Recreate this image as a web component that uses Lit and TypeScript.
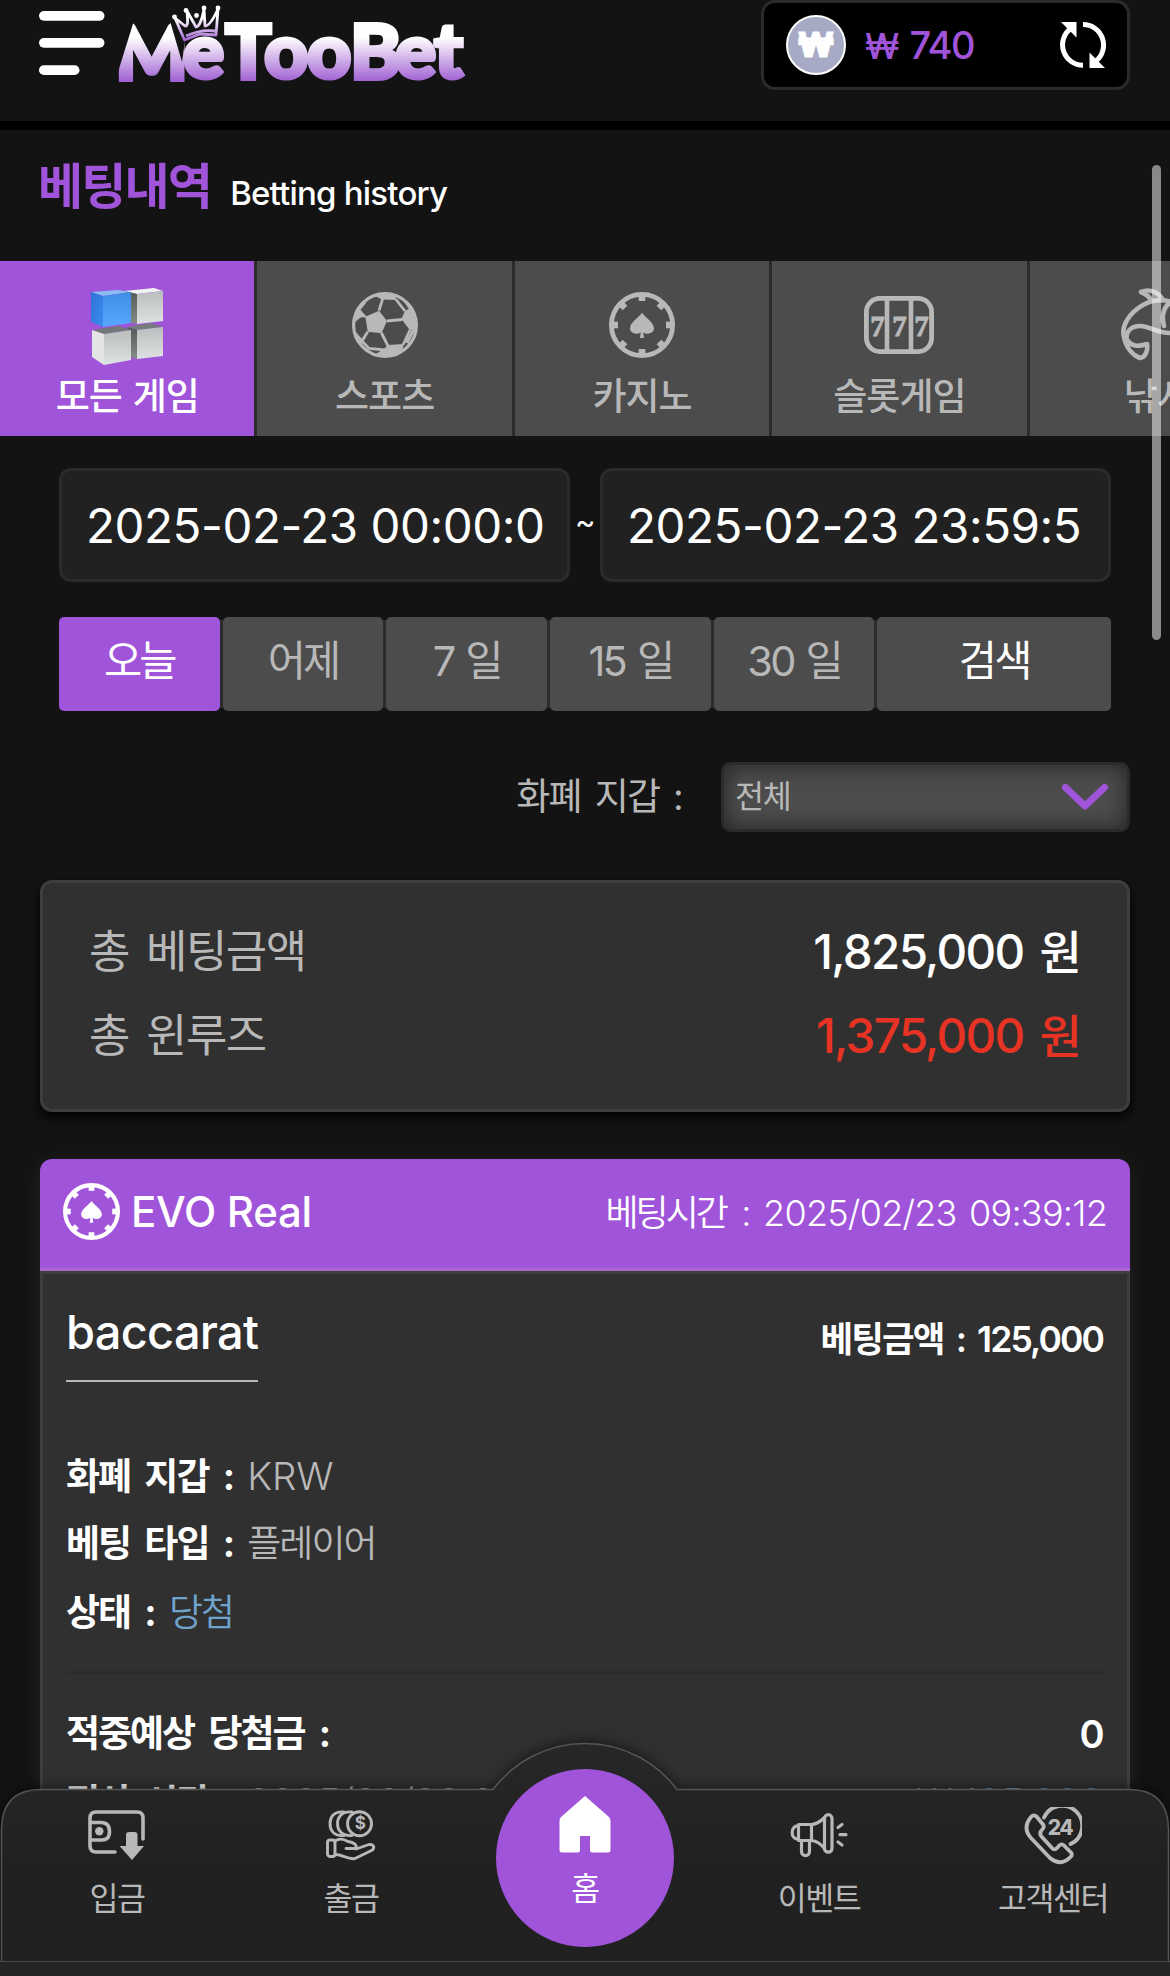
import { LitElement, html, svg, css } from "lit";
import { customElement } from "lit/decorators.js";
import { classMap } from "lit/directives/class-map.js";

const chipIcon = html`<svg class="chip" viewBox="0 0 66 66" fill="currentColor">
  <circle cx="33" cy="33" r="30.6" fill="none" stroke="currentColor" stroke-width="4.8" />
  ${[0, 45, 90, 135, 180, 225, 270, 315].map(
    (a) => svg`<rect x="29.7" y="3" width="6.6" height="6" transform="rotate(${a} 33 33)" />`
  )}
  <path d="M33 20.7C36 25.500 45 30 45 36.500C45 41 38.500 43.500 34.300 40.200L35 46H31L31.700 40.200C27.500 43.500 21 41 21 36.500C21 30 30 25.500 33 20.700Z" />
</svg>`;

const cubesIcon = html`<svg width="74" height="80" viewBox="0 0 74 80">
  <defs>
    <linearGradient id="blue" x1="0" y1="0" x2="0" y2="1"><stop offset="0" stop-color="#3f8ce6" /><stop offset="1" stop-color="#58a7ff" /></linearGradient>
    <linearGradient id="side" x1="0" y1="0" x2="1" y2="1"><stop offset="0" stop-color="#2d73d6" /><stop offset="1" stop-color="#3d8cf0" /></linearGradient>
    <linearGradient id="gray" x1="0" y1="0" x2="0" y2="1"><stop offset="0" stop-color="#b9bdbe" /><stop offset="1" stop-color="#dfe2e2" /></linearGradient>
    <linearGradient id="dark" x1="0" y1="0" x2="0" y2="1"><stop offset="0" stop-color="#555958" /><stop offset="1" stop-color="#868b8a" /></linearGradient>
  </defs>
  <path d="M34 4L64 1L73 4L47 7Z" fill="#f1f2f2" />
  <path d="M34 4L47 7V37L41 36Z" fill="url(#dark)" />
  <path d="M47 7L73 4V34L47 37Z" fill="url(#gray)" />
  <path d="M1 5L28 3L41 5L13 9Z" fill="#8dbcf3" />
  <path d="M1 5L13 9V40L1 35Z" fill="url(#side)" />
  <path d="M13 9L41 5V36L13 40Z" fill="url(#blue)" />
  <path d="M37 40L60 36L73 40L47 43Z" fill="#777b7b" />
  <path d="M37 40L47 43V72L41 70Z" fill="url(#dark)" />
  <path d="M47 43L73 40V69L47 72Z" fill="url(#gray)" />
  <path d="M2 43L28 39L41 43L14 47Z" fill="#737777" />
  <path d="M2 43L14 47V78L2 70Z" fill="#e3e5e5" />
  <path d="M14 47L41 43V73L14 78Z" fill="url(#gray)" />
</svg>`;

const ballIcon = html`<svg width="66" height="66" viewBox="0 0 66 66">
  <g fill="currentColor">
    <path d="M13.400 24.700L27 18.700L35 29L29.500 41.300L15.700 39.700Z" />
    <path d="M49.500 27L53 18.700L59 16L64.500 26V37L58 38.500Z" />
    <path d="M36 53L51.500 52L50 61L36 65L22 63L32 57Z" />
    <path d="M21 3L30 7.500L45 8L42 2Z" />
    <path d="M3 20L9 18L13 24L8 26L3 30Z" />
    <path d="M2 38L10 47L10 54L5 48Z" />
  </g>
  <g fill="none" stroke="currentColor" stroke-width="2.800">
    <circle cx="33" cy="33" r="31.400" stroke-width="3.200" />
    <path d="M27 18.700L30.600 7M44 7.500L53 19M35 29L50.400 27.500M29.500 41L36 54M15.700 39.700L10 49L17 56.500L33 58M58 38L51 53M13.400 25L6 18.500L13 10M54 10L58.500 17M62 37L55 51" />
  </g>
</svg>`;

const slotIcon = html`<svg width="70" height="58" viewBox="0 0 70 58">
  <rect x="2.400" y="2.400" width="65.200" height="53.200" rx="13.500" fill="none" stroke="currentColor" stroke-width="4.800" />
  <path d="M23 3V55M47 3V55" stroke="currentColor" stroke-width="4.600" />
  <text x="13" y="39.500" class="seven">7</text>
  <text x="35" y="39.500" class="seven">7</text>
  <text x="57" y="39.500" class="seven">7</text>
</svg>`;

const fishIcon = html`<svg width="72" height="74" viewBox="0 0 72 74" fill="none" stroke="currentColor" stroke-width="4.600" stroke-linejoin="round" stroke-linecap="round">
  <path d="M51 14C41 11 31 12 22 17C8 25 0 38 3 49C5 59 11 67 19 70C25 69 27 62 26 56C19 58 12 60 6 52C4 45 9 38 19 38C29 38 37 46 52 45C62 44 68 38 70 30" />
  <path d="M30 12C28 8 25 6 20 4C30 0 38 5 42 12M51 14C43 17 40 27 43 38M51 14C61 17 67 22 70 30" />
</svg>`;

const walletIcon = html`<svg width="58" height="51" viewBox="0 0 58 51" fill="none" stroke="currentColor" stroke-width="3.600" stroke-linecap="round">
  <path d="M27 42H8Q2 42 2 36V8Q2 2 8 2H49Q55 2 55 8V29M3 12.500H13Q21.500 12.500 21.500 21.500T13 30H3" />
  <circle cx="11.300" cy="21.300" r="4.200" fill="currentColor" stroke="none" />
  <path d="M38 25Q38 22 41 22H46.500Q49.500 22 49.500 25V36H56L44 50L31.500 36H38Z" fill="currentColor" stroke="none" />
</svg>`;

const coinsIcon = html`<svg width="50" height="51" viewBox="0 0 50 51" fill="none" stroke="currentColor" stroke-width="2.900" stroke-linecap="round" stroke-linejoin="round">
  <circle cx="33.500" cy="13.700" r="12" />
  <path d="M26 2C15 1 11.500 8 11.500 13.700S15 26.500 26 25.500M18 2C7 1 4 8 4 13.700S7 26.500 18 25.500" />
  <rect x="1.500" y="30" width="7.500" height="16.500" rx="2.600" />
  <path d="M9 31C14 27.500 18 29 22 31.500C28 32 31 35 30 38.500H20M30 39L43 34.500C47.500 34 49 37 46.500 40L29 48.500C22 50 16 44 9 44.500" />
  <text x="33.500" y="19.300" class="dollar">$</text>
</svg>`;

const hornIcon = html`<svg width="58" height="45" viewBox="0 0 58 45" fill="none" stroke="currentColor" stroke-width="3.200" stroke-linecap="round" stroke-linejoin="round">
  <rect x="34.500" y="1.700" width="7.500" height="37.500" rx="3.750" />
  <path d="M8.500 11.500H21.500V27.500H8.500ZM21.500 11.500C27 11.500 31 8 34.500 4.500M21.500 27.500C27 28 31 31 34.500 35.500M8.500 13C0 12 0 27 8.500 26M11.500 28V38.500C11.500 44 19.500 44 19.500 38.500V28M48 14.500L52 11.500M50 21.700H56M48 29L52 32" />
</svg>`;

const phoneIcon = html`<svg width="58" height="58" viewBox="0 0 58 58" fill="none" stroke="currentColor" stroke-width="3.800" stroke-linecap="round" stroke-linejoin="round">
  <path d="M20 10.500A20 20 0 1 1 46.500 37" />
  <path d="M12.500 9.500L19 17.500Q20.500 19.500 19 21.500Q14.500 26 17.500 29.500L28 41Q30.500 44 33.500 40.500Q37 35.500 40 38.500L47 45.500Q48.500 47.500 47 49.500Q37 60 26 51L7 31Q-2 21 7 10Q9.500 7 12.500 9.500Z" />
  <text x="36" y="27.500" class="hours">24</text>
</svg>`;

const tabs = [
  { label: "모든 게임", icon: cubesIcon, on: true },
  { label: "스포츠", icon: ballIcon },
  { label: "카지노", icon: chipIcon },
  { label: "슬롯게임", icon: slotIcon },
  { label: "낚시", icon: fishIcon },
];

const logoLetters: [string, number, number][] = [
  ["M", 115, 80],
  ["e", 183, 77.5],
  ["T", 225, 79],
  ["o", 264, 77.5],
  ["o", 307, 77.5],
  ["B", 350, 78.5],
  ["e", 395, 77.5],
  ["t", 434, 77.5],
];

@customElement("app-root")
export class AppRoot extends LitElement {
  static styles = css`
    :host {
      display: block;
      position: relative;
      width: 1170px;
      height: 1976px;
      overflow: hidden;
      background: #131313;
      color: #fff;
      font-family: Inter, "Noto Sans CJK KR", sans-serif;
      --accent: #a054da;
      --muted: #b8b8b8;
      --line: #2b2b2b;
    }
    * { box-sizing: border-box; }
    svg { display: block; flex: none; }
    .header { height: 130px; border-bottom: 9px solid #000; display: flex; justify-content: space-between; padding-right: 40px; }
    .brand { width: 480px; height: 100px; }
    .logo { font: 900 77px Lato, sans-serif; stroke-linejoin: miter; }
    .balance { width: 369px; height: 90px; border: 3px solid var(--line); border-radius: 14px; background: #000; display: flex; align-items: center; padding: 0 20px 0 22px; }
    .coin { width: 60px; height: 60px; border: 2.5px solid #fff; border-radius: 50%; background: #a7aac4; display: flex; align-items: center; justify-content: center; font: 900 34px/1 Inter, sans-serif; -webkit-text-stroke: 1px #fff; }
    .amount { flex: 1; padding-left: 19px; color: var(--accent); font-size: 38px; font-weight: 500; letter-spacing: -1.5px; word-spacing: 3px; }
    .sign { font-size: 35px; }
    .title { height: 131px; display: flex; align-items: baseline; padding: 29px 0 0 38px; }
    .title-ko { font-size: 49px; line-height: 56px; font-weight: 700; color: var(--accent); letter-spacing: -1.8px; }
    .title-en { position: relative; top: 1px; font-size: 33px; font-weight: 500; letter-spacing: -.8px; margin-left: 19px; }
    .tabs { display: flex; height: 175px; width: 1287px; }
    .tab { width: 257.5px; border-right: 3px solid var(--line); background: #4c4c4c; color: var(--muted); display: flex; flex-direction: column; align-items: center; font-size: 37px; font-weight: 500; letter-spacing: -1px; word-spacing: 2px; }
    .tab.on { background: var(--accent); color: #fff; }
    .tab-icon { height: 109px; padding-top: 19px; display: flex; align-items: center; }
    .tab.on .tab-icon { padding-top: 23px; }
    .tab-label { line-height: 54px; white-space: nowrap; }
    .chip { width: 66px; height: 66px; }
    .seven { font: 700 29px "Liberation Serif", serif; fill: currentColor; stroke: currentColor; stroke-width: .8px; text-anchor: middle; }
    .range { display: flex; align-items: center; justify-content: space-between; padding: 32px 59px 0; }
    .date { width: 511px; height: 114px; border: 3px solid var(--line); border-radius: 12px; background: #212121; font-size: 47.5px; line-height: 109px; padding-left: 24px; overflow: hidden; white-space: nowrap; letter-spacing: -.45px; }
    .tilde { font-size: 31px; padding-bottom: 8px; width: 20px; text-align: center; }
    .periods { display: flex; height: 94px; margin: 35px 59px 0; }
    .period { width: 164px; padding-right: 3px; background: linear-gradient(var(--line), var(--line)) right center / 3px 88px no-repeat; }
    .period-face { height: 94px; border-radius: 5px; background: #4c4c4c; color: var(--muted); font-size: 41.5px; line-height: 88px; text-align: center; letter-spacing: -2.8px; word-spacing: 3px; }
    .period.on .period-face { background: var(--accent); color: #fff; }
    .period.find { width: 234px; padding: 0; }
    .period.find .period-face { color: #fff; }
    .wallet { display: flex; align-items: center; justify-content: flex-end; height: 70px; margin: 51px 40px 0; color: var(--muted); }
    .wallet-label { font-size: 37px; letter-spacing: -1.7px; word-spacing: 5px; margin-right: 39px; line-height: 70px; }
    .select { width: 409px; height: 70px; border: 3px solid var(--line); border-radius: 10px; background: #4c4c4c; box-shadow: inset 0 0 22px rgba(0, 0, 0, .55); display: flex; align-items: center; justify-content: space-between; padding: 0 18px 0 11px; font-size: 31.5px; line-height: 62px; letter-spacing: -1.2px; }
    .summary { height: 232px; margin: 48px 40px 0; border: 3px solid #3e3e3e; border-radius: 12px; background: #303030; box-shadow: 0 5px 12px #000; padding: 27px 47px 0 46px; }
    .sum-row { display: flex; justify-content: space-between; height: 84px; line-height: 84px; font-size: 45px; letter-spacing: -1.5px; word-spacing: 6px; color: var(--muted); }
    .sum-value { font-size: 47.5px; font-weight: 500; color: #fff; letter-spacing: -1.7px; word-spacing: 5px; }
    .sum-value .won { font-size: 46px; }
    .sum-value.loss { color: #e63323; }
    .card { margin: 47px 40px 0; border-radius: 12px 12px 0 0; box-shadow: 0 4px 20px rgba(255, 255, 255, .07); }
    .card-head { height: 112px; border-radius: 12px 12px 0 0; background: var(--accent); border-bottom: 3px solid #a968cf; display: flex; align-items: center; padding: 0 23px 4px; }
    .card-head .chip { width: 57px; height: 57px; }
    .vendor { flex: 1; padding-left: 11px; font-size: 42px; font-weight: 500; letter-spacing: -.3px; }
    .time { font-size: 36px; line-height: 50px; padding-top: 3px; font-weight: 350; letter-spacing: -.75px; word-spacing: 3px; }
    .time .ko { letter-spacing: -3px; margin-right: 3px; }
    .card-body { height: 640px; border: 3px solid #3e3e3e; background: #303030; padding: 23px 24px 0 23px; }
    .game { display: flex; justify-content: space-between; height: 144.5px; }
    .game-name { height: 85px; border-bottom: 2px solid var(--muted); font-size: 47px; line-height: 70px; font-weight: 500; letter-spacing: -.75px; }
    .stake { font-size: 35.5px; line-height: 85px; font-weight: 600; letter-spacing: -1.9px; word-spacing: 5px; }
    .row { height: 68.5px; line-height: 68px; font-size: 37px; font-weight: 700; letter-spacing: -2px; word-spacing: 7.5px; display: flex; justify-content: space-between; white-space: nowrap; }
    .value { color: var(--muted); font-weight: 350; }
    .value.latin { font-weight: 300; font-size: 38.5px; letter-spacing: -.2px; word-spacing: 0; }
    .value.win { color: #6fa3cc; }
    .settle { line-height: 66px; }
    .payout { font-size: 38px; font-weight: 600; letter-spacing: -1.5px; }
    .rule { height: 3px; background: #2b2b2b; margin: 24px 0 26px; }
    .nav { position: absolute; left: 0; bottom: 0; width: 1170px; height: 236px; }
    .nav-shape { position: absolute; left: 0; top: 0; filter: drop-shadow(0 -2px 6px rgba(0, 0, 0, .5)); }
    .nav-items { position: relative; display: flex; height: 100%; }
    .nav-item { flex: 1; display: flex; flex-direction: column; align-items: center; padding-top: 63px; color: var(--muted); font-size: 31.5px; letter-spacing: -1.5px; }
    .nav-icon { height: 65px; display: flex; align-items: center; }
    .nav-label { line-height: 62px; white-space: nowrap; }
    .nav-item.home { color: #fff; padding-top: 51px; }
    .home .nav-label { line-height: 66px; }
    .dollar { font: 700 17px Inter, sans-serif; fill: currentColor; stroke: none; text-anchor: middle; }
    .hours { font: 800 21px Inter, sans-serif; fill: currentColor; stroke: none; text-anchor: middle; letter-spacing: -1.5px; }
    .scrollbar { position: absolute; left: 1152px; top: 165px; width: 9px; height: 475px; border-radius: 5px; background: rgba(255, 255, 255, .5); }
  `;

  private renderBrand() {
    return html`<svg class="brand" viewBox="0 0 480 100">
      <defs>
        <linearGradient id="logo-fill" gradientUnits="userSpaceOnUse" x1="0" y1="22" x2="0" y2="84">
          <stop offset="0" stop-color="#fff" /><stop offset=".25" stop-color="#fff" /><stop offset="1" stop-color="#9b57d0" />
        </linearGradient>
        <linearGradient id="crown-fill" gradientUnits="userSpaceOnUse" x1="0" y1="6" x2="0" y2="42">
          <stop offset=".35" stop-color="#fff" /><stop offset="1" stop-color="#9b57d0" />
        </linearGradient>
      </defs>
      <rect x="39" y="11" width="65.500" height="9.700" rx="4.850" fill="#fff" />
      <rect x="39" y="38" width="65.500" height="9.700" rx="4.850" fill="#fff" />
      <rect x="39" y="65.300" width="40.500" height="9.700" rx="4.850" fill="#fff" />
      <text class="logo" fill="url(#logo-fill)" stroke="url(#logo-fill)" stroke-width="4" x=${logoLetters
        .map((l) => l[1])
        .join(" ")} y=${logoLetters.map((l) => l[2]).join(" ")}>${logoLetters.map((l) => l[0]).join("")}</text>
      <path d="M112 14H136L118 72L112 84Z" fill="#131313" />
      <path d="M168 14H200L217 37L200 35L185 41L182 62Z" fill="#131313" />
      <g fill="none" stroke="url(#crown-fill)" stroke-width="2.800" stroke-linejoin="round">
        <path d="M175 18L184.500 40L200 34L216 35L218 9C213 20 209 26 205 26L204 9C202 20 199 27 196 27L187 11C188 23 188 26 185 26Z" />
        <path d="M186 36Q201 29 215 31" />
      </g>
      <g fill="#fff"><circle cx="174.500" cy="17" r="2.400" /><circle cx="186" cy="10.500" r="2.400" /><circle cx="196.500" cy="15.500" r="2.400" /><circle cx="204" cy="8" r="2.400" /><circle cx="218" cy="8" r="2.400" /></g>
    </svg>`;
  }

  private renderNav() {
    const items = [
      { label: "입금", icon: walletIcon },
      { label: "출금", icon: coinsIcon },
      {
        label: "홈",
        home: true,
        icon: html`<svg width="52" height="58" viewBox="0 0 52 58"><path d="M26 1L50 22Q51.500 23.500 51.500 26V55Q51.500 57.500 49 57.500H33Q31 57.500 31 55V41H21V55Q21 57.500 19 57.500H3Q.5 57.500 .5 55V26Q.5 23.500 2 22Z" fill="#fff" /></svg>`,
      },
      { label: "이벤트", icon: hornIcon },
      { label: "고객센터", icon: phoneIcon },
    ];
    return html`<nav class="nav">
      <svg class="nav-shape" width="1170" height="236" viewBox="0 0 1170 236">
        <defs><linearGradient id="bar" x1="0" y1="0" x2="0" y2="1"><stop offset="0" stop-color="#272727" /><stop offset=".5" stop-color="#212121" /><stop offset="1" stop-color="#202020" /></linearGradient></defs>
        <path d="M1.500 240V90Q1.500 49.500 41 49.500H493A115 115 0 0 1 677 49.500H1129Q1168.500 49.500 1168.500 90V240Z" fill="url(#bar)" stroke="#555" stroke-width="1.500" />
        <rect y="221" width="1170" height="15" fill="#242626" />
        <rect y="221" width="1170" height="1" fill="#484848" />
        <circle cx="585" cy="118" r="89" fill="#a054da" />
      </svg>
      <div class="nav-items">
        ${items.map(
          (i) => html`<div class=${classMap({ "nav-item": true, home: !!i.home })}>
            <span class="nav-icon">${i.icon}</span><span class="nav-label">${i.label}</span>
          </div>`
        )}
      </div>
    </nav>`;
  }

  render() {
    return html`
      <header class="header">
        ${this.renderBrand()}
        <div class="balance">
          <span class="coin">₩</span>
          <span class="amount"><span class="sign">₩</span> 740</span>
          <svg width="48" height="47" viewBox="0 0 48 47" fill="none" stroke="#fff" stroke-width="5">
            <path d="M24 43.300A20.500 20.500 0 0 1 11 7M24 2.600A20.500 20.500 0 0 1 37 39" />
            <path d="M2 0H17.500V15.500ZM30.500 30.500L46 46H30.500Z" fill="#fff" stroke="none" />
          </svg>
        </div>
      </header>
      <div class="title"><span class="title-ko">베팅내역</span><span class="title-en">Betting history</span></div>
      <div class="tabs">
        ${tabs.map(
          (t) => html`<div class=${classMap({ tab: true, on: !!t.on })}>
            <span class="tab-icon">${t.icon}</span><span class="tab-label">${t.label}</span>
          </div>`
        )}
      </div>
      <div class="range">
        <div class="date">2025-02-23 00:00:0</div>
        <span class="tilde">~</span>
        <div class="date">2025-02-23 23:59:5</div>
      </div>
      <div class="periods">
        ${["오늘", "어제", "7 일", "15 일", "30 일", "검색"].map(
          (p, i) => html`<div class=${classMap({ period: true, on: i === 0, find: i === 5 })}>
            <div class="period-face">${p}</div>
          </div>`
        )}
      </div>
      <div class="wallet">
        <span class="wallet-label">화폐 지갑 :</span>
        <div class="select">
          <span>전체</span>
          <svg width="48" height="28" viewBox="0 0 48 28" fill="none" stroke="#a054da" stroke-width="7" stroke-linecap="round" stroke-linejoin="round"><path d="M4.500 4.500L24 23L43.500 4.500" /></svg>
        </div>
      </div>
      <section class="summary">
        <div class="sum-row"><span>총 베팅금액</span><span class="sum-value">1,825,000 <span class="won">원</span></span></div>
        <div class="sum-row"><span>총 윈루즈</span><span class="sum-value loss">1,375,000 <span class="won">원</span></span></div>
      </section>
      <section class="card">
        <div class="card-head">
          ${chipIcon}
          <span class="vendor">EVO Real</span>
          <span class="time"><span class="ko">베팅시간</span> : 2025/02/23 09:39:12</span>
        </div>
        <div class="card-body">
          <div class="game">
            <span class="game-name">baccarat</span>
            <span class="stake">베팅금액 : 125,000</span>
          </div>
          <div class="row"><span>화폐 지갑 : <span class="value latin">KRW</span></span></div>
          <div class="row"><span>베팅 타입 : <span class="value">플레이어</span></span></div>
          <div class="row"><span>상태 : <span class="value win">당첨</span></span></div>
          <div class="rule"></div>
          <div class="row"><span>적중예상 당첨금 :</span><span class="payout">0</span></div>
          <div class="row settle"><span>정산 시간 : <span class="value latin">2025/02/23 09:39:12</span></span><span class="value latin win">₩ 125,000</span></div>
        </div>
      </section>
      ${this.renderNav()}
      <div class="scrollbar"></div>
    `;
  }
}
